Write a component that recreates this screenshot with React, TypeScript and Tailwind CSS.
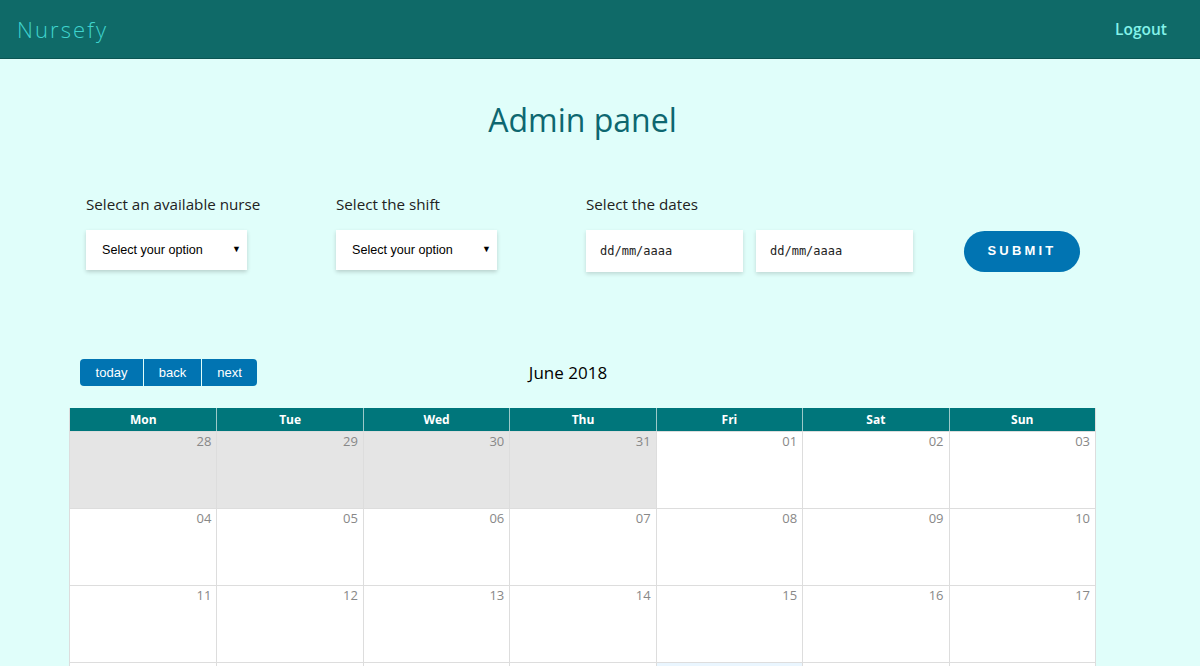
export default function App() {
  const days = ['Mon', 'Tue', 'Wed', 'Thu', 'Fri', 'Sat', 'Sun'];
  const weeks = [
    ['28', '29', '30', '31', '01', '02', '03'],
    ['04', '05', '06', '07', '08', '09', '10'],
    ['11', '12', '13', '14', '15', '16', '17'],
    ['', '', '', '', '', '', ''],
  ];

  return (
    <div className="h-[666px] overflow-hidden bg-[#e0fefa] font-['Open_Sans',sans-serif] text-[#222]">
      <nav className="h-[59px] bg-[#0f6a68] border-b border-[#0b5553] flex items-center justify-between pl-[17px] pr-[33px]">
        <span className="text-[22px] font-light tracking-[2.1px] text-[#3fd4ce]">Nursefy</span>
        <span className="text-[15.5px] font-semibold text-[#84f2e8] pt-[2px]">Logout</span>
      </nav>

      <div className="w-[1027px] ml-[69px]">
        <h1 className="text-center text-[32px] text-[#0d6770] pt-[39px] leading-[44px]">Admin panel</h1>

        <div className="flex items-start pl-[17px] mt-[52px]">
          <div className="w-[250px]">
            <p className="text-[15.2px] leading-[20px]">Select an available nurse</p>
            <div className="mt-[16px] w-[161px] h-[40px] bg-white shadow-[0_2px_4px_rgba(0,0,0,0.18)] flex items-center justify-between pl-[16px] pr-[6px] font-['Liberation_Sans',sans-serif] text-[12.6px] text-black">
              <span>Select your option</span>
              <span className="text-[9px]">▼</span>
            </div>
          </div>
          <div className="w-[250px]">
            <p className="text-[15.2px] leading-[20px]">Select the shift</p>
            <div className="mt-[16px] w-[161px] h-[40px] bg-white shadow-[0_2px_4px_rgba(0,0,0,0.18)] flex items-center justify-between pl-[16px] pr-[6px] font-['Liberation_Sans',sans-serif] text-[12.6px] text-black">
              <span>Select your option</span>
              <span className="text-[9px]">▼</span>
            </div>
          </div>
          <div>
            <p className="text-[15.2px] leading-[20px]">Select the dates</p>
            <div className="mt-[16px] flex items-center">
              <div className="w-[157px] h-[42px] bg-white shadow-[0_2px_4px_rgba(0,0,0,0.15)] flex items-center pl-[14px] font-['DejaVu_Sans_Mono',monospace] text-[12px] text-[#222]">
                dd/mm/aaaa
              </div>
              <div className="ml-[13px] w-[157px] h-[42px] bg-white shadow-[0_2px_4px_rgba(0,0,0,0.15)] flex items-center pl-[14px] font-['DejaVu_Sans_Mono',monospace] text-[12px] text-[#222]">
                dd/mm/aaaa
              </div>
              <button className="ml-[51px] w-[116px] h-[41px] rounded-full bg-[#0174b2] text-white font-['Liberation_Sans',sans-serif] font-bold text-[13px] tracking-[3.2px]">
                SUBMIT
              </button>
            </div>
          </div>
        </div>

        <div className="flex items-center mt-[87px] pl-[11px] pr-[217px]">
          <div className="flex font-['Liberation_Sans',sans-serif] text-[13px] text-white">
            <button className="w-[63px] h-[27px] bg-[#0174b2] rounded-l-[4px]">today</button>
            <button className="w-[57px] h-[27px] bg-[#0174b2] ml-[1px]">back</button>
            <button className="w-[55px] h-[27px] bg-[#0174b2] ml-[1px] rounded-r-[4px]">next</button>
          </div>
          <div className="flex-1 text-center text-[17px] text-black">June 2018</div>
        </div>

        <div className="mt-[22px] border-x border-[#ddd]">
          <div className="grid grid-cols-7 bg-[#00767b]">
            {days.map((d, i) => (
              <div
                key={d}
                className={`h-[23px] flex items-center justify-center text-white text-[12px] font-bold ${i > 0 ? 'border-l border-[#9cc9c9]' : ''}`}
              >
                {d}
              </div>
            ))}
          </div>
          {weeks.map((w, wi) => (
            <div key={wi} className="grid grid-cols-7 h-[77px] border-t border-[#ddd] first:border-t-0">
              {w.map((d, di) => (
                <div
                  key={di}
                  className={`text-right pr-[5px] leading-[18px] text-[13px] text-[#888] ${di > 0 ? 'border-l border-[#ddd]' : ''} ${
                    wi === 0 && di < 4 ? 'bg-[#e5e5e5]' : wi === 3 && di === 4 ? 'bg-[#eaf6ff]' : 'bg-white'
                  }`}
                >
                  {d}
                </div>
              ))}
            </div>
          ))}
        </div>
      </div>
    </div>
  );
}
